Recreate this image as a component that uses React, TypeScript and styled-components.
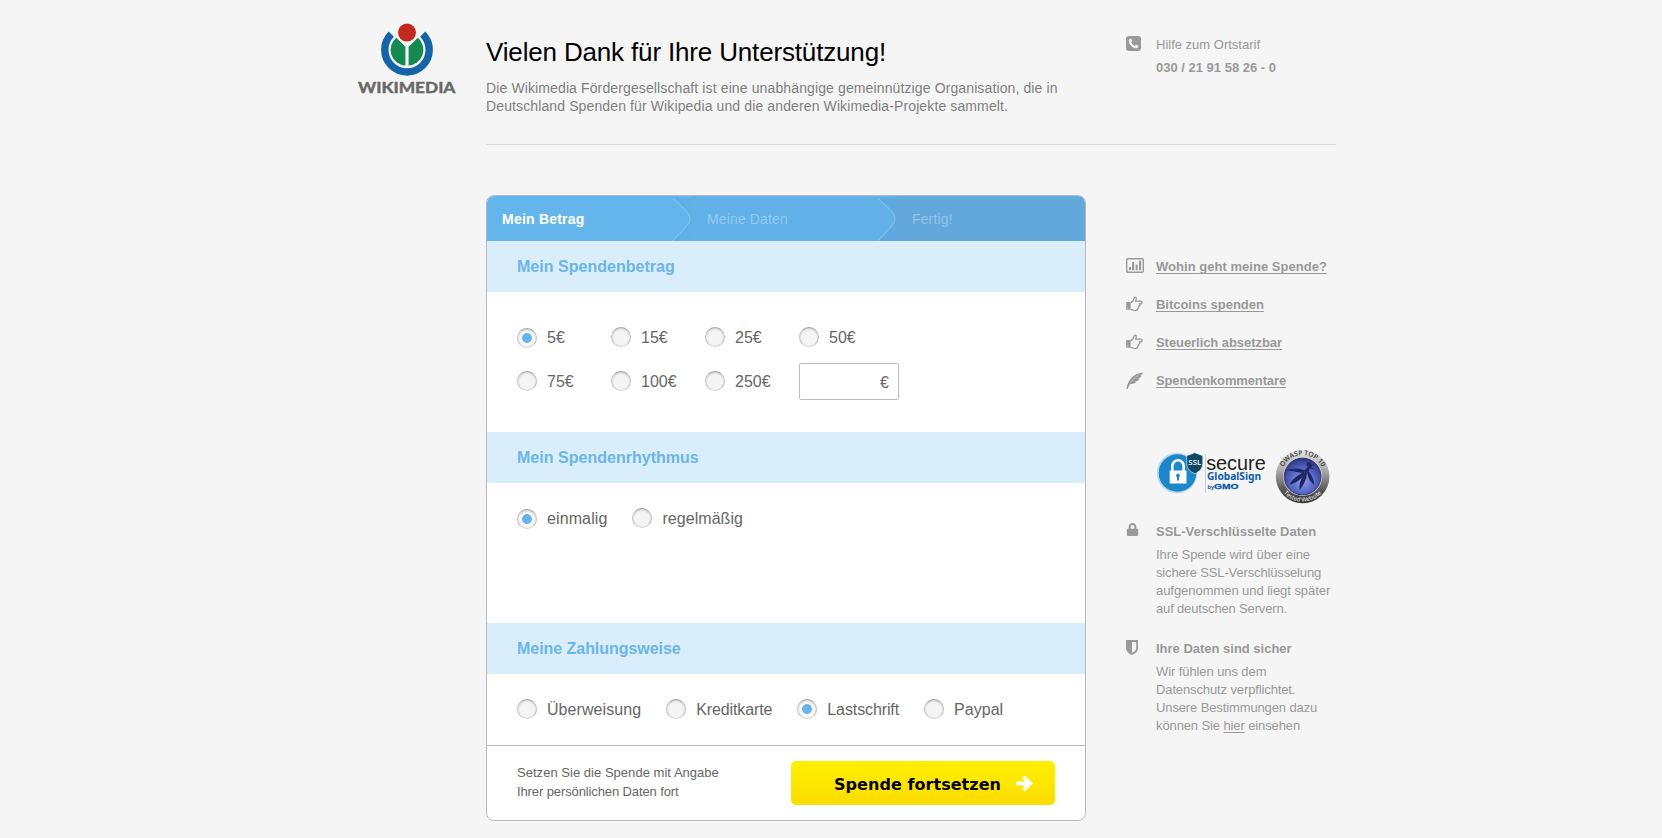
import React, { useState } from "react";
import styled, { createGlobalStyle, css } from "styled-components";
import { FaLock } from "react-icons/fa";

const GlobalStyle = createGlobalStyle`
  body {
    margin: 0;
    background: #f5f5f5;
    font-family: "Liberation Sans", Helvetica, Arial, sans-serif;
    font-size: 13px;
    line-height: 17px;
    color: #999;
  }
  * { box-sizing: border-box; }
  h1, h2, h3, p { margin: 0; }
`;

const Page = styled.div`
  width: 1010px;
  height: 838px;
  margin: 0 auto;
  padding-left: 30px;
  overflow: hidden;
`;

const Header = styled.header`
  display: flex;
`;

const LogoLink = styled.div`
  width: 130px;
  padding-top: 23px;
  svg { display: block; }
`;

const HeaderInner = styled.div`
  display: flex;
  width: 850px;
  height: 145px;
  border-bottom: 1px solid #dadada;
`;

const Intro = styled.div`
  width: 640px;
  padding-top: 37px;
`;

const Title = styled.h1`
  font-size: 26px;
  line-height: 30px;
  font-weight: normal;
  letter-spacing: -0.16px;
  color: #000;
  white-space: nowrap;
`;

const Lead = styled.p`
  margin-top: 12px;
  font-size: 14px;
  line-height: 18px;
  letter-spacing: 0.12px;
  color: #7f7f7f;
  white-space: nowrap;
`;

const Hotline = styled.div`
  display: flex;
  padding-top: 36px;
`;

const IconCell = styled.span`
  flex: none;
  display: block;
  width: 30px;
  svg { display: block; }
`;

const PhoneNumber = styled.strong`
  display: block;
  margin-top: 6px;
`;

const Content = styled.div`
  display: flex;
  gap: 40px;
  padding: 50px 0 0 130px;
`;

const Card = styled.form`
  width: 600px;
  height: 626px;
  border: 1px solid #b6b9c4;
  border-radius: 8px;
  background: #fff;
  overflow: hidden;
`;

const Steps = styled.div`
  display: flex;
  height: 45px;
`;

const Step = styled.div<{ $bg: string; $fg: string; $active?: boolean }>`
  display: flex;
  justify-content: space-between;
  width: 205px;
  padding: 14px 0 0 15px;
  background: ${(p) => p.$bg};
  color: ${(p) => p.$fg};
  font-size: 14px;
  line-height: 18px;
  letter-spacing: ${(p) => (p.$active ? 0.22 : 0.14)}px;
  font-weight: ${(p) => (p.$active ? "bold" : "normal")};
  svg { display: block; margin-top: -14px; }
  &:last-child { flex: 1; }
`;

const SectionTitle = styled.h2<{ $track?: number }>`
  height: 51px;
  padding: 15px 30px 0;
  background: #daedfb;
  color: #6bb6e9;
  font-size: 16px;
  line-height: 21px;
  letter-spacing: ${(p) => p.$track ?? 0.02}px;
`;

const AmountGrid = styled.div`
  display: grid;
  grid-template-columns: 94px 94px 94px 100px;
  grid-auto-rows: 44px;
  align-items: start;
  height: 140px;
  padding: 27px 30px 0;
  & > label { padding-top: 8px; }
`;

const OptionRow = styled.div<{ $height: number }>`
  display: flex;
  gap: 25px;
  align-items: flex-start;
  height: ${(p) => p.$height}px;
  padding: 25px 30px 0;
`;

const Option = styled.label<{ $track?: number }>`
  display: flex;
  gap: 10px;
  color: #666;
  font-size: 16px;
  line-height: 21px;
  letter-spacing: ${(p) => p.$track ?? 0}px;
  white-space: nowrap;
`;

const Radio = styled.input<{ $low?: boolean }>`
  appearance: none;
  flex: none;
  width: 20px;
  height: 20px;
  margin: ${(p) => (p.$low ? 1 : 0)}px 0 0;
  border: 1px solid;
  border-color: #a3a3a3 #c0c0c0 #d3d3d3;
  border-radius: 50%;
  background: #f4f4f4;
  box-shadow: inset 0 1px 2px rgba(0, 0, 0, 0.16);
  ${(p) =>
    p.checked &&
    css`
      background: radial-gradient(circle at center, #65b5ec 4.5px, #f7f7f7 5.3px);
    `}
`;

const AmountField = styled.div`
  display: flex;
  width: 100px;
  height: 37px;
  padding: 8px 9px 0;
  border: 1px solid #b9bcc5;
  border-radius: 2px;
  color: #666;
  font-size: 16px;
  line-height: 21px;
`;

const AmountInput = styled.input`
  flex: 1;
  min-width: 0;
  height: 20px;
  padding: 0;
  border: 0;
  outline: 0;
  background: transparent;
  font: inherit;
`;

const CardFooter = styled.div`
  display: flex;
  justify-content: space-between;
  height: 75px;
  padding: 15px 30px 0;
  border-top: 1px solid #b6b9c4;
`;

const Hint = styled.p`
  padding-top: 2px;
  line-height: 19px;
  letter-spacing: 0.03px;
  color: #666;
  span { letter-spacing: -0.11px; }
`;

const Submit = styled.button`
  display: flex;
  align-items: center;
  justify-content: space-between;
  width: 264px;
  height: 44px;
  padding: 4px 22px 0 43px;
  border: 0;
  border-radius: 5px;
  background: linear-gradient(#fff000, #fbdc00);
  color: #000;
  font: bold 16px/20px "DejaVu Sans", sans-serif;
  letter-spacing: 0.05px;
  svg { display: block; margin-top: -4px; }
`;

const Sidebar = styled.aside`
  width: 210px;
  padding-top: 63px;
`;

const LinkList = styled.nav`
  display: flex;
  flex-direction: column;
  gap: 21px;
`;

const SideRow = styled.div`
  display: flex;
  white-space: nowrap;
`;

const SideLink = styled.a<{ $track: number }>`
  color: #999;
  font-weight: bold;
  letter-spacing: ${(p) => p.$track}px;
  text-decoration: underline 1px;
  text-underline-offset: 2px;
  text-decoration-skip-ink: none;
`;

const Badges = styled.div`
  display: flex;
  height: 54px;
  margin: 60px 0 19px 30px;
  gap: 7px;
  svg { display: block; flex: none; overflow: visible; }
`;

const Fact = styled.section`
  display: flex;
  margin-bottom: 22px;
  white-space: nowrap;
`;

const FactTitle = styled.h3`
  font-size: 13px;
  line-height: 17px;
  letter-spacing: -0.01px;
`;

const FactText = styled.p`
  margin-top: 6px;
  line-height: 18px;
`;

const Line = styled.span<{ $track: number }>`
  display: block;
  letter-spacing: ${(p) => p.$track}px;
  a {
    color: inherit;
    text-decoration: underline 1px;
    text-underline-offset: 2px;
  }
`;

const WikimediaLogo = () => (
  <svg width="104" height="72" viewBox="0 0 104 72">
    <g transform="translate(51 26.8)">
      <path d="M-15.7 -15.7 A22.2 22.2 0 1 0 15.7 -15.7" fill="none" stroke="#1664a8" strokeWidth="7.4" />
      <path d="M-1.6 15.7 A15.7 15.7 0 0 1 -10.8 -12 L-1.6 -3 Z" fill="#158a50" />
      <path d="M1.6 15.7 A15.7 15.7 0 0 0 10.8 -12 L1.6 -3 Z" fill="#158a50" />
      <circle cy="-17.2" r="9" fill="#c22a1f" />
    </g>
    <text x="2" y="69.8" fontFamily="Lato, sans-serif" fontWeight="900" fontSize="14.6" fill="#696969" stroke="#696969" strokeWidth=".3" textLength="97.5" lengthAdjust="spacingAndGlyphs">
      WIKIMEDIA
    </text>
  </svg>
);

const PhoneIcon = () => (
  <svg width="15" height="15" viewBox="0 0 15 15">
    <rect width="15" height="15" rx="3" fill="#999" />
    <path d="M4.6 2.6 C3.4 3 2.6 4 2.8 5.4 C3.3 8.8 6.3 11.8 9.8 12.3 C11.2 12.4 12.3 11.5 12.5 10.2 L12.4 9.8 L10.2 8.7 L9.8 8.8 L8.9 9.9 C7.4 9.3 5.9 7.8 5.2 6.2 L6.2 5.3 L6.3 4.9 L5.2 2.7 Z" fill="#f5f5f5" />
  </svg>
);

const ChartIcon = () => (
  <svg width="18" height="15" viewBox="0 0 18 15">
    <rect x=".7" y=".7" width="16.6" height="13.6" rx="1" fill="none" stroke="#999" strokeWidth="1.4" />
    <path d="M3 9h2v3.2h-2zM6 4h2.2v8.2h-2.2zM9.6 6.5h2v5.7h-2zM13 2.7h2.2v9.5h-2.2z" fill="#999" />
  </svg>
);

const HandIcon = () => (
  <svg width="18" height="16" viewBox="0 0 18 16">
    <path d="M.2 6h4.4v7.8H.2z" fill="#999" />
    <circle cx="1.8" cy="12" r=".6" fill="#f5f5f5" />
    <path d="M4.6 6.5 C6.8 6.2 7.5 4.1 8 2.3 C8.3 .5 10.4 .8 10.3 2.7 C10.2 3.7 9.8 4.4 9.6 5.1 H14.6 C16.8 5.1 16.8 7.9 14.6 7.9 H13.6 C14.1 9 13.4 10 12.8 10.3 C13 11.4 12.3 12 11.8 12.3 C11.8 14 10.7 14.7 9.2 14.7 C7.2 14.7 6.6 13.4 4.6 13.3" fill="none" stroke="#999" strokeWidth="1.3" />
  </svg>
);

const QuillIcon = () => (
  <svg width="18" height="18" viewBox="0 0 18 18">
    <path d="M.3 17 C1.2 12 3.2 7.4 7 4.2 C10 1.7 13.6 .8 16.9 .4 C16.4 2 15.6 3 14.2 3.7 L15.5 4 C14.7 5.6 13.4 6.4 11.8 6.8 L13.4 7.3 C12.2 9 10.4 9.6 8.8 9.7 L10.2 10.3 C8.4 11.8 6.4 12.2 4.2 11.9 C3.2 13.4 2.4 15 1.7 17 Z" fill="#999" />
    <path d="M4.6 10.4 C6.6 7.6 9 5.2 12 3.5" fill="none" stroke="#f5f5f5" strokeWidth=".4" />
  </svg>
);

const ShieldIcon = () => (
  <svg width="12" height="15" viewBox="0 0 12 15">
    <path d="M0 0H12V8C12 11.5 9 13.8 6 15C3 13.8 0 11.5 0 8Z" fill="#999" />
    <path d="M6 2H10.2V8C10.2 10.2 8.2 11.9 6 12.9Z" fill="#f5f5f5" />
  </svg>
);

const ArrowIcon = () => (
  <svg width="17" height="17" viewBox="0 0 17 17">
    <path d="M.2 8.5H13.5M7.4 1.8L14.1 8.5L7.4 15.2" fill="none" stroke="#fff" strokeWidth="4" />
  </svg>
);

const Chevron = ({ next, line }: { next: string; line: string }) => (
  <svg width="20" height="45" viewBox="0 0 20 45">
    <path d="M.8 2 L14.5 15.2 Q21.5 23 14.5 30.2 L.8 45 H20 V2 Z" fill={next} />
    <path d="M.8 2 L14.5 15.2 Q21.5 23 14.5 30.2 L.8 45" fill="none" stroke={line} strokeWidth="1.1" />
  </svg>
);

const GlobalSignBadge = () => (
  <svg width="112" height="48" viewBox="0 -1 112 48">
    <circle cx="21" cy="22" r="20.2" fill="#b9d7ea" />
    <circle cx="21.5" cy="22" r="18.8" fill="#1c88ca" />
    <path d="M16.3 20 V15 a5.7 5.7 0 0 1 11.4 0 V20" fill="none" stroke="#fff" strokeWidth="2.6" />
    <rect x="13.7" y="19.5" width="16.8" height="13" fill="#fff" />
    <path d="M22 22.6a2 2 0 0 1 1 3.7v3.2h-2v-3.2a2 2 0 0 1 1-3.7z" fill="#1c88ca" />
    <path d="M38.7 2.5 L46.8 5.6 V13 C46.8 18 43.5 21.5 38.7 23.5 C34 21.5 30.7 18 30.7 13 V5.6 Z" transform="translate(0 -.8)" fill="#0d4a63" stroke="#dfe9ee" strokeWidth=".7" />
    <text x="32.3" y="14.2" fontFamily="Open Sans, sans-serif" fontWeight="600" fontSize="7.6" fill="#fff" textLength="13" lengthAdjust="spacingAndGlyphs">SSL</text>
    <path d="M49.5 3V42" stroke="#c4c4c4" strokeWidth=".8" />
    <text x="50.2" y="18.6" fontFamily="Liberation Sans, sans-serif" fontSize="20" fill="#222" textLength="59.5" lengthAdjust="spacingAndGlyphs">secure</text>
    <text x="51" y="29.4" fontFamily="Noto Sans, sans-serif" fontWeight="bold" fontSize="10.4" fill="#0b5cab" textLength="54" lengthAdjust="spacingAndGlyphs">GlobalSign</text>
    <text x="51.5" y="38" fontFamily="Open Sans, sans-serif" fontWeight="bold" fontSize="5.5" fill="#0b5cab">by</text>
    <text x="58" y="38.2" fontFamily="Liberation Sans, sans-serif" fontWeight="bold" fontSize="7.6" fill="#0b5cab" stroke="#0b5cab" strokeWidth=".3" textLength="24.5" lengthAdjust="spacingAndGlyphs">GMO</text>
  </svg>
);

const OwaspBadge = () => (
  <svg width="56" height="54" viewBox="0 0 56 54">
    <defs>
      <linearGradient id="metal" x1="0" y1="0" x2="0" y2="1">
        <stop offset="0" stopColor="#e8e8e8" />
        <stop offset=".4" stopColor="#a8a8a8" />
        <stop offset=".75" stopColor="#585858" />
        <stop offset="1" stopColor="#2c2c2c" />
      </linearGradient>
      <radialGradient id="lens" cx=".5" cy=".62" r=".6">
        <stop offset="0" stopColor="#8f9eee" />
        <stop offset=".6" stopColor="#5563c0" />
        <stop offset="1" stopColor="#2f3886" />
      </radialGradient>
      <path id="arcTop" d="M6.2 26.5 A21.4 21.4 0 0 1 49 26.5" />
      <path id="arcBottom" d="M2.4 26.5 A25.2 25.2 0 0 0 52.8 26.5" />
    </defs>
    <circle cx="27.6" cy="26.5" r="26.8" fill="url(#metal)" />
    <circle cx="27.6" cy="26.5" r="19.6" fill="#c9cbd4" />
    <circle cx="27.6" cy="26.5" r="18.3" fill="url(#lens)" stroke="#303767" strokeWidth="1" />
    <g fill="#1e2664">
      <circle cx="34" cy="14.6" r="2.3" />
      <path d="M35 15 L39.5 14.5 L36 17 L39 19 L34.5 18.5 C34.5 20.5 33 22 30 23.5 L29 20.5 Z" />
      <path d="M30 20.5 C23 17.5 16 18.5 10.5 20.5 C18 20.5 24 22.5 28.5 23.5 Z" />
      <path d="M29 22 C23 24.5 18 28.5 14.5 34.5 C21 33.5 27 28.5 30 23.2 Z" />
      <path d="M30.5 22.5 C26 28 24 33 24.5 40 C29 35 31.5 29 32 23 Z" />
      <path d="M32 22 C33 28 35.5 32 39 35 C39 30 37 25 33.5 21 Z" />
    </g>
    <text fontFamily="Open Sans, sans-serif" fontWeight="600" fontSize="6.6" fill="#333">
      <textPath href="#arcTop" startOffset="50%" textAnchor="middle">OWASP TOP 10</textPath>
    </text>
    <text fontFamily="Open Sans, sans-serif" fontSize="6" fill="#fff">
      <textPath href="#arcBottom" startOffset="50%" textAnchor="middle">Tested Website</textPath>
    </text>
  </svg>
);

type Choice = { id: string; label: string; track?: number; low?: boolean };

const amounts: Choice[] = [
  { id: "5", label: "5€", low: true },
  { id: "15", label: "15€" },
  { id: "25", label: "25€" },
  { id: "50", label: "50€" },
  { id: "75", label: "75€" },
  { id: "100", label: "100€" },
  { id: "250", label: "250€" },
];

const rhythms: Choice[] = [
  { id: "once", label: "einmalig", track: 0.11, low: true },
  { id: "regular", label: "regelmäßig", track: 0.05 },
];

const payments: Choice[] = [
  { id: "transfer", label: "Überweisung", track: 0.07 },
  { id: "card", label: "Kreditkarte", track: -0.11 },
  { id: "debit", label: "Lastschrift", track: -0.11 },
  { id: "paypal", label: "Paypal", track: 0.03 },
];

const Choices = ({ name, items, initial }: { name: string; items: Choice[]; initial: string }) => {
  const [value, setValue] = useState(initial);
  return (
    <>
      {items.map((c) => (
        <Option key={c.id} $track={c.track}>
          <Radio type="radio" name={name} checked={value === c.id} onChange={() => setValue(c.id)} $low={c.low} />
          {c.label}
        </Option>
      ))}
    </>
  );
};

const links = [
  { text: "Wohin geht meine Spende?", track: 0.03, icon: <ChartIcon /> },
  { text: "Bitcoins spenden", track: -0.03, icon: <HandIcon /> },
  { text: "Steuerlich absetzbar", track: -0.06, icon: <HandIcon /> },
  { text: "Spendenkommentare", track: -0.13, icon: <QuillIcon /> },
];

export default function App() {
  return (
    <>
      <GlobalStyle />
      <Page>
        <Header>
          <LogoLink>
            <WikimediaLogo />
          </LogoLink>
          <HeaderInner>
            <Intro>
              <Title>Vielen Dank für Ihre Unterstützung!</Title>
              <Lead>
                Die Wikimedia Fördergesellschaft ist eine unabhängige gemeinnützige Organisation, die in
                <br />
                Deutschland Spenden für Wikipedia und die anderen Wikimedia-Projekte sammelt.
              </Lead>
            </Intro>
            <Hotline>
              <IconCell>
                <PhoneIcon />
              </IconCell>
              <div>
                Hilfe zum Ortstarif
                <PhoneNumber>030 / 21 91 58 26 - 0</PhoneNumber>
              </div>
            </Hotline>
          </HeaderInner>
        </Header>

        <Content>
          <Card>
            <Steps>
              <Step $bg="#65b5ed" $fg="#fff" $active>
                Mein Betrag
                <Chevron next="#60afe5" line="#7cc1f0" />
              </Step>
              <Step $bg="#61b0e8" $fg="#92caf1">
                Meine Daten
                <Chevron next="#5fa9de" line="#80c0ec" />
              </Step>
              <Step $bg="#63a8da" $fg="#92c4e9">
                Fertig!
              </Step>
            </Steps>

            <SectionTitle>Mein Spendenbetrag</SectionTitle>
            <AmountGrid>
              <Choices name="amount" items={amounts} initial="5" />
              <AmountField>
                <AmountInput aria-label="Betrag" />€
              </AmountField>
            </AmountGrid>

            <SectionTitle>Mein Spendenrhythmus</SectionTitle>
            <OptionRow $height={140}>
              <Choices name="rhythm" items={rhythms} initial="once" />
            </OptionRow>

            <SectionTitle $track={-0.04}>Meine Zahlungsweise</SectionTitle>
            <OptionRow $height={71}>
              <Choices name="payment" items={payments} initial="debit" />
            </OptionRow>

            <CardFooter>
              <Hint>
                Setzen Sie die Spende mit Angabe
                <br />
                <span>Ihrer persönlichen Daten fort</span>
              </Hint>
              <Submit type="button">
                Spende fortsetzen
                <ArrowIcon />
              </Submit>
            </CardFooter>
          </Card>

          <Sidebar>
            <LinkList>
              {links.map((l) => (
                <SideRow key={l.text}>
                  <IconCell>{l.icon}</IconCell>
                  <SideLink $track={l.track}>{l.text}</SideLink>
                </SideRow>
              ))}
            </LinkList>

            <Badges>
              <GlobalSignBadge />
              <OwaspBadge />
            </Badges>

            <Fact>
              <IconCell>
                <FaLock size={13} color="#999" />
              </IconCell>
              <div>
                <FactTitle>SSL-Verschlüsselte Daten</FactTitle>
                <FactText>
                  <Line $track={-0.08}>Ihre Spende wird über eine</Line>
                  <Line $track={-0.15}>sichere SSL-Verschlüsselung</Line>
                  <Line $track={-0.05}>aufgenommen und liegt später</Line>
                  <Line $track={-0.16}>auf deutschen Servern.</Line>
                </FactText>
              </div>
            </Fact>
            <Fact>
              <IconCell>
                <ShieldIcon />
              </IconCell>
              <div>
                <FactTitle>Ihre Daten sind sicher</FactTitle>
                <FactText>
                  <Line $track={-0.09}>Wir fühlen uns dem</Line>
                  <Line $track={-0.12}>Datenschutz verpflichtet.</Line>
                  <Line $track={-0.12}>Unsere Bestimmungen dazu</Line>
                  <Line $track={-0.11}>
                    können Sie <a>hier</a> einsehen
                  </Line>
                </FactText>
              </div>
            </Fact>
          </Sidebar>
        </Content>
      </Page>
    </>
  );
}
